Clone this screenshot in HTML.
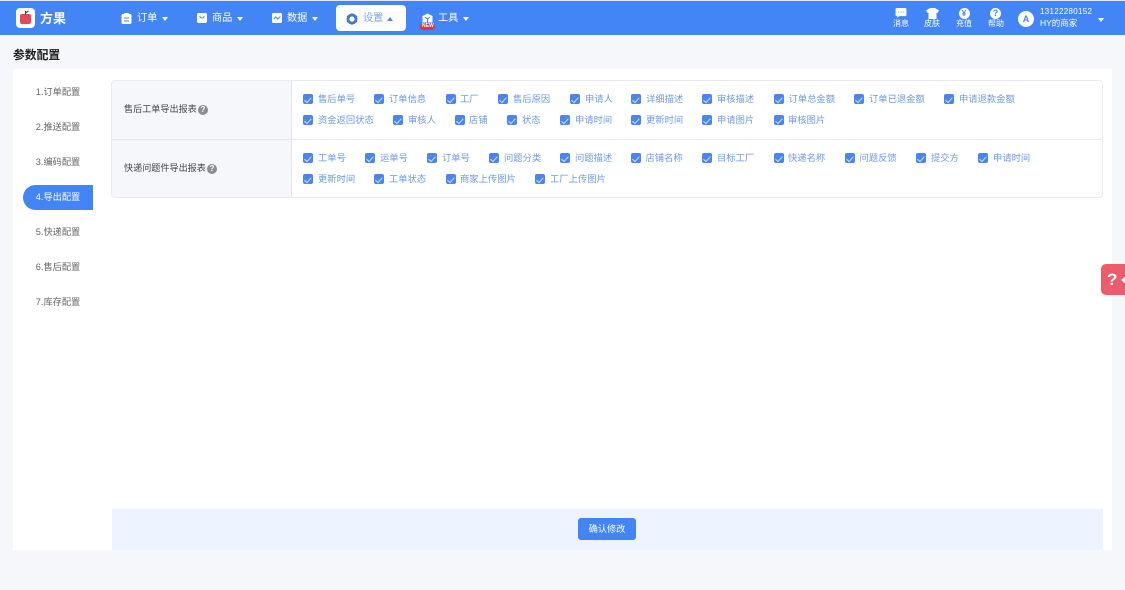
<!DOCTYPE html>
<html lang="zh"><head><meta charset="utf-8"><title>参数配置</title>
<style>
*{box-sizing:border-box}
html,body{margin:0;padding:0;width:1125px;height:590px;overflow:hidden;background:#f5f7fb;font-family:"Liberation Sans","Noto Sans CJK SC",sans-serif}
#r{position:relative;width:1125px;height:590px;overflow:hidden;filter:blur(.3px)}
.a{position:absolute;white-space:nowrap}
.t{position:absolute;white-space:nowrap;line-height:12px}
.cb{position:absolute;width:10px;height:10px;background:#4a86ee;border-radius:2px}
.cb::after{content:"";position:absolute;left:3.2px;top:1.6px;width:3.400px;height:5.600px;border:solid #cfe0fb;border-width:0 1px 1px 0;transform:rotate(42deg)}
.l{position:absolute;white-space:nowrap;font-size:9.300px;line-height:12px;color:#6f9ae4}
.nav{color:#fff;font-size:10.200px;line-height:14px;top:12px}
.side{position:absolute;left:23px;width:70px;text-align:center;font-size:9.200px;line-height:12px;color:#666}
.tri{position:absolute;width:0;height:0;border-left:3px solid transparent;border-right:3px solid transparent;border-top:4px solid #fff}
.ic{color:#fff;font-size:8px;line-height:10px;position:absolute;top:19px;width:24px;text-align:center}
</style></head><body><div id="r">
<div class="a" style="left:0;top:1px;width:1125px;height:34px;background:#4485f5"></div>
<div class="a" style="left:0;top:0;width:1125px;height:1px;background:#dfe8f7"></div>

<!-- logo -->
<div class="a" style="left:16px;top:8px;width:19px;height:20px;background:#fff;border-radius:4px"></div>
<svg class="a" style="left:16px;top:8px" width="19" height="20" viewBox="0 0 19 20"><rect x="4" y="6" width="11" height="10" rx="2" fill="#e8475a"/><path d="M9.500 7V3M9.500 5L12.500 3" stroke="#2c5a34" stroke-width="1.200" fill="none"/></svg>
<div class="t" style="left:40px;top:12px;font-size:13px;line-height:14px;font-weight:bold;color:#fff">方果</div>

<!-- nav -->
<svg class="a" style="left:121px;top:13px" width="11" height="11" viewBox="0 0 11 11"><rect x=".5" y="1" width="10" height="10" rx="1.500" fill="#fff"/><rect x="3" y="0" width="5" height="3" rx="1" fill="#fff"/><path d="M3 5h5M3 8h5" stroke="#4485f5" stroke-width="1"/></svg>
<div class="t nav" style="left:137px">订单</div><div class="tri" style="left:161.500px;top:17px"></div>

<svg class="a" style="left:197px;top:13px" width="10" height="10" viewBox="0 0 10 10"><rect width="10" height="10" rx="1.500" fill="#fff"/><path d="M2.800 2.800c0 3 4.400 3 4.400 0" stroke="#4485f5" stroke-width="1" fill="none"/></svg>
<div class="t nav" style="left:212px">商品</div><div class="tri" style="left:236.500px;top:17px"></div>

<svg class="a" style="left:272px;top:13px" width="10" height="10" viewBox="0 0 10 10"><rect width="10" height="10" rx="1.500" fill="#fff"/><path d="M1.800 6l2-2 2 2 2.600-2.500" stroke="#4485f5" stroke-width="1" fill="none"/></svg>
<div class="t nav" style="left:287px">数据</div><div class="tri" style="left:311.500px;top:17px"></div>

<div class="a" style="left:336px;top:5px;width:70px;height:26px;background:#fff;border-radius:4px"></div>
<svg class="a" style="left:346px;top:13px" width="12" height="12" viewBox="0 0 12 12"><circle cx="6" cy="6" r="4" fill="none" stroke="#3f78d8" stroke-width="2.800"/><circle cx="6" cy="1.400" r="1.200" fill="#3f78d8"/><circle cx="6" cy="10.600" r="1.200" fill="#3f78d8"/><circle cx="2" cy="3.700" r="1.200" fill="#3f78d8"/><circle cx="10" cy="3.700" r="1.200" fill="#3f78d8"/><circle cx="2" cy="8.300" r="1.200" fill="#3f78d8"/><circle cx="10" cy="8.300" r="1.200" fill="#3f78d8"/></svg>
<div class="t nav" style="left:363px;color:#7ea6e8">设置</div>
<div class="tri" style="left:387px;top:17px;border-top:0;border-bottom:4px solid #4a86ee"></div>

<svg class="a" style="left:419px;top:12px" width="18" height="19" viewBox="0 0 18 19"><path d="M8.500 1.500l5 2.500v6.500h-10V4z" fill="#fff"/><path d="M6 5l2.500 2L11 5M8.500 7v3.500" stroke="#4485f5" stroke-width="1.100" fill="none"/><rect x=".5" y="11" width="15.500" height="7" rx="3.500" fill="#d63a3f"/></svg>
<div class="t" style="left:422px;top:23px;font-size:5px;line-height:6px;font-weight:bold;color:#fff">NEW</div>
<div class="t nav" style="left:438px">工具</div><div class="tri" style="left:462.500px;top:17px"></div>

<!-- right icons -->
<svg class="a" style="left:895px;top:8px" width="12" height="10" viewBox="0 0 12 11"><path d="M0 1.500A1.500 1.500 0 0 1 1.500 0h9A1.500 1.500 0 0 1 12 1.500v6A1.500 1.500 0 0 1 10.500 9H4L2 11V9H1.500A1.500 1.500 0 0 1 0 7.500z" fill="#fff"/><path d="M3 4.500h1M5.500 4.500h1M8 4.500h1" stroke="#4485f5" stroke-width="1"/></svg>
<div class="ic" style="left:889px">消息</div>
<svg class="a" style="left:926px;top:8px" width="13" height="11" viewBox="0 0 13 11"><path d="M4 0h5l4 2.500-1.500 2.500H10.500v6h-8V5H1.500L0 2.500z" fill="#fff"/></svg>
<div class="ic" style="left:920px">皮肤</div>
<div class="a" style="left:958.500px;top:8px;width:11px;height:11px;border-radius:50%;background:#fff;color:#4485f5;font-size:8px;line-height:11px;text-align:center;font-weight:bold">¥</div>
<div class="ic" style="left:952px">充值</div>
<div class="a" style="left:990px;top:8px;width:11px;height:11px;border-radius:50%;background:#fff;color:#4485f5;font-size:9px;line-height:11px;text-align:center;font-weight:bold">?</div>
<div class="ic" style="left:984px">帮助</div>

<div class="a" style="left:1018px;top:11px;width:16px;height:16px;border-radius:50%;background:#fff;color:#4485f5;font-size:9px;line-height:16px;text-align:center;font-weight:bold">A</div>
<div class="t" style="left:1040px;top:7px;font-size:8px;line-height:10px;color:#fff;letter-spacing:.3px">13122280152</div>
<div class="t" style="left:1040px;top:18px;font-size:8.500px;line-height:11px;color:#fff">HY的商家</div>
<div class="tri" style="left:1098px;top:18px;border-left-width:3.500px;border-right-width:3.500px;border-top-width:4.500px"></div>

<!-- title -->
<div class="t" style="left:13px;top:48px;font-size:11.800px;line-height:14px;font-weight:bold;color:#222">参数配置</div>

<!-- card -->
<div class="a" style="left:13px;top:69px;width:1099px;height:481px;background:#fff"></div>

<!-- side -->
<div class="side" style="top:86px">1.订单配置</div>
<div class="side" style="top:121px">2.推送配置</div>
<div class="side" style="top:156px">3.编码配置</div>
<div class="a" style="left:23px;top:185px;width:70px;height:25px;background:#4485f5;border-radius:13px 0 0 13px"></div>
<div class="side" style="top:191px;color:#fff">4.导出配置</div>
<div class="side" style="top:226px">5.快递配置</div>
<div class="side" style="top:261px">6.售后配置</div>
<div class="side" style="top:296px">7.库存配置</div>

<!-- table -->
<div class="a" style="left:111px;top:80px;width:992px;height:118px;border:1px solid #e8ebf0;border-radius:4px;background:#fff;overflow:hidden">
<div class="a" style="left:0;top:0;width:180px;height:116px;background:#f5f7fb;border-right:1px solid #e3e6ec"></div>
<div class="a" style="left:0;top:58px;width:990px;height:1px;background:#e6e8ed"></div>
</div>
<div class="t" style="left:124px;top:103px;font-size:9.100px;color:#444">售后工单导出报表</div>
<div class="a" style="left:198px;top:105px;width:10px;height:10px;border-radius:50%;background:#8a8d93;color:#fff;font-size:8px;line-height:10px;text-align:center;font-weight:bold">?</div>
<div class="t" style="left:124px;top:162px;font-size:9.100px;color:#444">快递问题件导出报表</div>
<div class="a" style="left:207px;top:164px;width:10px;height:10px;border-radius:50%;background:#8a8d93;color:#fff;font-size:8px;line-height:10px;text-align:center;font-weight:bold">?</div>

<!-- checkboxes row 1 -->
<div class="cb" style="left:303px;top:94px"></div><div class="l" style="left:318px;top:93px">售后单号</div>
<div class="cb" style="left:374px;top:94px"></div><div class="l" style="left:389px;top:93px">订单信息</div>
<div class="cb" style="left:445.500px;top:94px"></div><div class="l" style="left:460px;top:93px">工厂</div>
<div class="cb" style="left:498px;top:94px"></div><div class="l" style="left:513px;top:93px">售后原因</div>
<div class="cb" style="left:570px;top:94px"></div><div class="l" style="left:585px;top:93px">申请人</div>
<div class="cb" style="left:631px;top:94px"></div><div class="l" style="left:646px;top:93px">详细描述</div>
<div class="cb" style="left:702px;top:94px"></div><div class="l" style="left:717px;top:93px">审核描述</div>
<div class="cb" style="left:774px;top:94px"></div><div class="l" style="left:788.500px;top:93px">订单总金额</div>
<div class="cb" style="left:854px;top:94px"></div><div class="l" style="left:869px;top:93px">订单已退金额</div>
<div class="cb" style="left:944px;top:94px"></div><div class="l" style="left:959px;top:93px">申请退款金额</div>
<!-- row 2 -->
<div class="cb" style="left:303px;top:115px"></div><div class="l" style="left:318px;top:114px">资金返回状态</div>
<div class="cb" style="left:393px;top:115px"></div><div class="l" style="left:408px;top:114px">审核人</div>
<div class="cb" style="left:455px;top:115px"></div><div class="l" style="left:469px;top:114px">店铺</div>
<div class="cb" style="left:507px;top:115px"></div><div class="l" style="left:522px;top:114px">状态</div>
<div class="cb" style="left:560px;top:115px"></div><div class="l" style="left:575px;top:114px">申请时间</div>
<div class="cb" style="left:631px;top:115px"></div><div class="l" style="left:646px;top:114px">更新时间</div>
<div class="cb" style="left:702px;top:115px"></div><div class="l" style="left:717px;top:114px">申请图片</div>
<div class="cb" style="left:774px;top:115px"></div><div class="l" style="left:788px;top:114px">审核图片</div>
<!-- row 3 -->
<div class="cb" style="left:303px;top:153px"></div><div class="l" style="left:318px;top:152px">工单号</div>
<div class="cb" style="left:365px;top:153px"></div><div class="l" style="left:380px;top:152px">运单号</div>
<div class="cb" style="left:427px;top:153px"></div><div class="l" style="left:442px;top:152px">订单号</div>
<div class="cb" style="left:489px;top:153px"></div><div class="l" style="left:504px;top:152px">问题分类</div>
<div class="cb" style="left:560px;top:153px"></div><div class="l" style="left:575px;top:152px">问题描述</div>
<div class="cb" style="left:631px;top:153px"></div><div class="l" style="left:645.500px;top:152px">店铺名称</div>
<div class="cb" style="left:702px;top:153px"></div><div class="l" style="left:717px;top:152px">目标工厂</div>
<div class="cb" style="left:774px;top:153px"></div><div class="l" style="left:788px;top:152px">快递名称</div>
<div class="cb" style="left:845px;top:153px"></div><div class="l" style="left:859.500px;top:152px">问题反馈</div>
<div class="cb" style="left:916px;top:153px"></div><div class="l" style="left:931px;top:152px">提交方</div>
<div class="cb" style="left:978px;top:153px"></div><div class="l" style="left:993px;top:152px">申请时间</div>
<!-- row 4 -->
<div class="cb" style="left:303px;top:174px"></div><div class="l" style="left:318px;top:173px">更新时间</div>
<div class="cb" style="left:374px;top:174px"></div><div class="l" style="left:389px;top:173px">工单状态</div>
<div class="cb" style="left:445.500px;top:174px"></div><div class="l" style="left:460px;top:173px">商家上传图片</div>
<div class="cb" style="left:535px;top:174px"></div><div class="l" style="left:550px;top:173px">工厂上传图片</div>

<!-- footer bar -->
<div class="a" style="left:112px;top:509px;width:991px;height:41px;background:#edf4ff"></div>
<div class="a" style="left:578px;top:518px;width:58px;height:22px;background:#4485f5;border-radius:3px;color:#fff;font-size:9.200px;line-height:22px;text-align:center">确认修改</div>

<!-- help float -->
<div class="a" style="left:1101px;top:264px;width:24px;height:31px;background:#ec5c6c;border-radius:5px 0 0 5px"></div>
<div class="t" style="left:1107px;top:270px;font-size:17px;line-height:19px;font-weight:bold;color:#fff">?</div>
<div class="a" style="left:1120.500px;top:276px;width:0;height:0;border-top:4px solid transparent;border-bottom:4px solid transparent;border-right:5px solid #fff"></div>
</div></body></html>
